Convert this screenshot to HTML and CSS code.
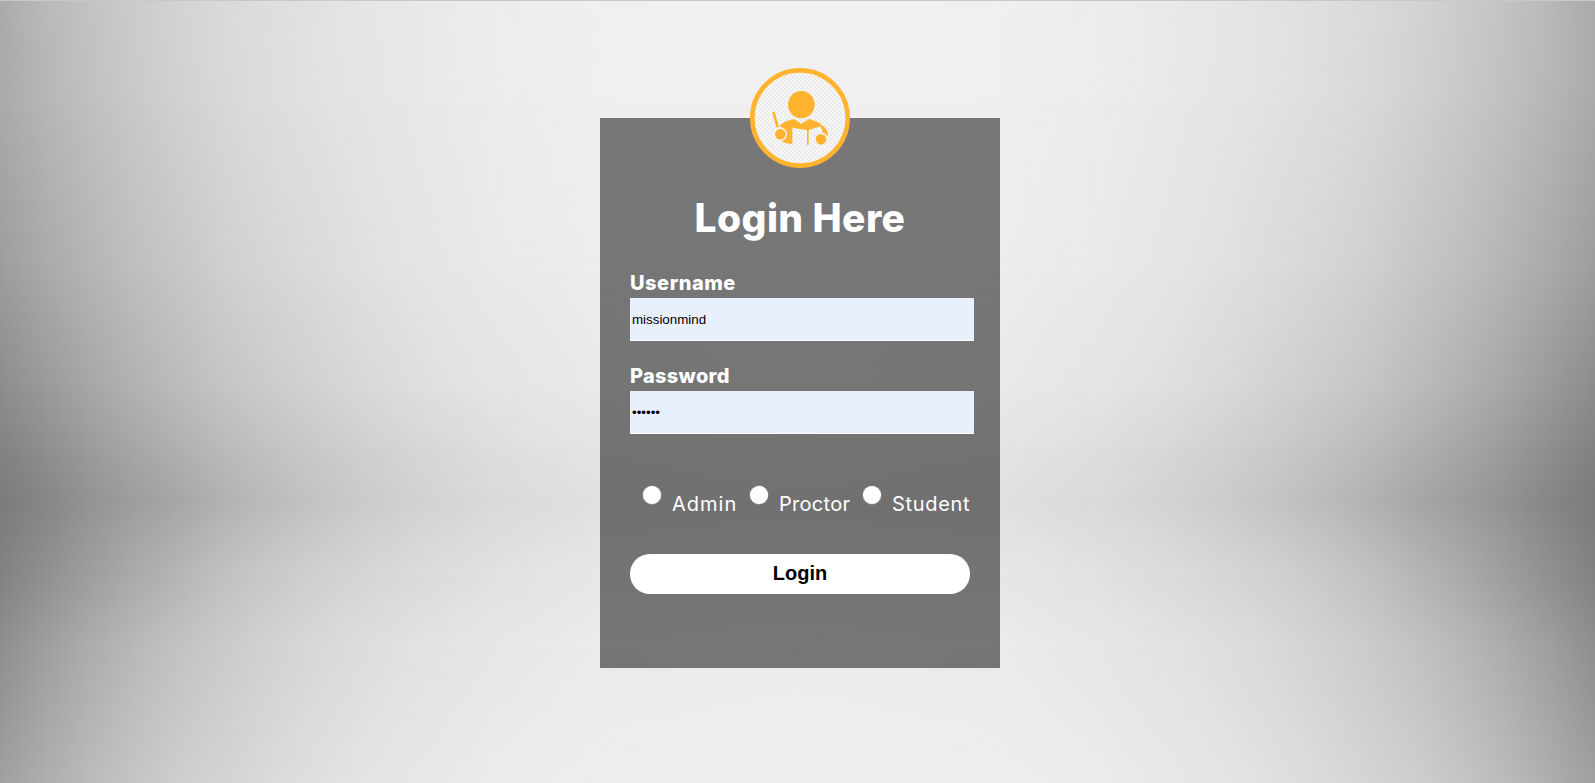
FILE: index.html
```html
<!DOCTYPE html>
<html lang="en">
<head>
<meta charset="utf-8">
<title>Login</title>
<link rel="stylesheet" href="styles.css">
</head>
<body>
<div class="page">
  <div class="backdrop" id="backdrop"></div>
  <main class="login-box">
    <svg class="avatar" viewBox="30 24 300 300" aria-hidden="true">
      <defs>
        <pattern id="checks" width="12" height="12" patternUnits="userSpaceOnUse">
          <rect width="12" height="12" fill="#f7f7f7"/>
          <path d="M0 0h6v6h-6zM6 6h6v6h-6z" fill="#ebebeb"/>
        </pattern>
      </defs>
      <circle cx="180" cy="174" r="143" fill="url(#checks)" stroke="#ffb32f" stroke-width="14"/>
      <g fill="#ffb32f">
        <ellipse cx="184" cy="134" rx="40" ry="41"/>
        <path d="M96 156l8-1 13 46-7 2z"/>
        <path d="M118 197q19-16 45-20l20 14 25-14q34 8 51 31 5 10 5 23l-5-5q-7-7-12-9l-1-11h-3l-1-7-38 12-47-8v50q-18-1-33-9l14-12q5-10-2-20-6-10-18-15z"/>
        <path d="M201 209h5v46h-5z"/>
      </g>
      <g fill="#ffb32f" stroke="#f4f4f4" stroke-width="4">
        <circle cx="121" cy="223" r="18"/>
        <circle cx="243" cy="238" r="18"/>
      </g>
    </svg>
    <h1 class="title">Login Here</h1>
    <form class="form">
      <label class="label user-label" for="user">Username</label>
      <input class="field" id="user" type="text" value="missionmind">
      <label class="label pass-label" for="pass">Password</label>
      <input class="field" id="pass" type="password" value="secret">
      <div class="roles">
        <label class="role"><span class="dot"></span><span class="role-name admin">Admin</span></label>
        <label class="role"><span class="dot"></span><span class="role-name proctor">Proctor</span></label>
        <label class="role"><span class="dot"></span><span class="role-name student">Student</span></label>
      </div>
      <button class="submit" type="button">Login</button>
    </form>
  </main>
</div>
<script src="backdrop.js"></script>
</body>
</html>
```
FILE: styles.css
```css
body { margin: 0; }
.page {
  display: grid;
  height: 783px;
  box-sizing: border-box;
  border-top: 1px solid #c8c8c8;
  overflow: hidden;
  font-family: Inter, sans-serif;
}
.backdrop, .login-box { grid-area: 1 / 1; }
.backdrop { display: grid; }
.band { grid-area: 1 / 1; }
.login-box {
  z-index: 1;
  justify-self: center;
  box-sizing: border-box;
  width: 400px;
  height: 550px;
  margin: 117px 0 0 5px;
  padding: 0 30px;
  background: rgba(0, 0, 0, 0.5);
  color: #fff;
}
.avatar {
  display: block;
  width: 100px;
  height: 100px;
  margin: -50px auto 0;
}
.title {
  margin: 20px 0 0;
  font-size: 39px;
  line-height: 60px;
  font-weight: 800;
  letter-spacing: 0.4px;
  text-align: center;
  white-space: nowrap;
}
.form { display: flex; flex-direction: column; padding-top: 20px; }
.label { font-size: 20px; line-height: 30px; font-weight: 800; }
.user-label { letter-spacing: 0.55px; }
.pass-label { letter-spacing: 0.3px; }
.field {
  box-sizing: border-box;
  width: 344px;
  height: 43px;
  margin: 0 0 20px;
  padding: 1px 2px;
  border: 0;
  border-bottom: 1px solid #fff;
  background: #e8f0fe;
  color: #000;
  font: 13.333px "Liberation Sans", Arial, sans-serif;
  outline: 0;
}
.roles { display: flex; margin-top: 32px; padding-left: 13px; height: 36px; }
.role { display: flex; }
.dot { width: 18px; height: 18px; border-radius: 50%; background: #fff; box-shadow: 0 0 0 0.5px #aaa; margin-right: 11px; }
.role-name { font-size: 20px; line-height: 36px; white-space: nowrap; }
.admin { width: 78px; letter-spacing: 1px; }
.proctor { width: 84px; letter-spacing: 0.3px; }
.student { letter-spacing: 0.7px; }
.submit {
  width: 340px;
  height: 40px;
  margin-top: 32px;
  padding: 0 0 2px;
  border: 0;
  border-radius: 20px;
  background: #fff;
  color: #000;
  font: bold 20px "Liberation Sans", Arial, sans-serif;
}
```
FILE: backdrop.js
```javascript
// Studio backdrop: grey levels from the edge to the centre, one row per height.
const stops = [0, 45, 90, 135, 180, 225, 270, 315, 360, 420, 500, 600, 797];
const rows = [
  [0, [171, 185, 195, 204, 212, 218, 222, 226, 230, 233, 237, 240, 241]],
  [100, [170, 182, 192, 201, 209, 216, 221, 225, 228, 232, 236, 239, 240]],
  [274, [156, 169, 180, 190, 198, 207, 213, 218, 223, 228, 233, 236, 237]],
  [390, [140, 153, 166, 177, 187, 196, 203, 209, 215, 222, 228, 233, 235]],
  [449, [130, 142, 155, 166, 176, 186, 194, 201, 207, 214, 222, 228, 231]],
  [499, [123, 134, 147, 158, 167, 178, 187, 195, 202, 210, 218, 224, 226]],
  [574, [130, 144, 158, 171, 182, 193, 201, 208, 213, 219, 225, 231, 233]],
  [649, [143, 159, 173, 185, 195, 203, 210, 216, 221, 226, 231, 235, 236]],
  [783, [160, 174, 187, 197, 206, 212, 218, 223, 227, 231, 235, 237, 238]]
];
const backdrop = document.getElementById('backdrop');
rows.forEach(([y, levels], i) => {
  const left = levels.map((v, k) => `rgb(${v},${v},${v}) ${stops[k]}px`);
  const right = levels.map((v, k) => `rgb(${v},${v},${v}) calc(100% - ${stops[k]}px)`).reverse();
  const band = document.createElement('div');
  band.className = 'band';
  band.style.background = `linear-gradient(90deg, ${left.concat(right).join(', ')})`;
  if (i) band.style.maskImage = `linear-gradient(transparent ${rows[i - 1][0]}px, #000 ${y}px)`;
  backdrop.append(band);
});
```
